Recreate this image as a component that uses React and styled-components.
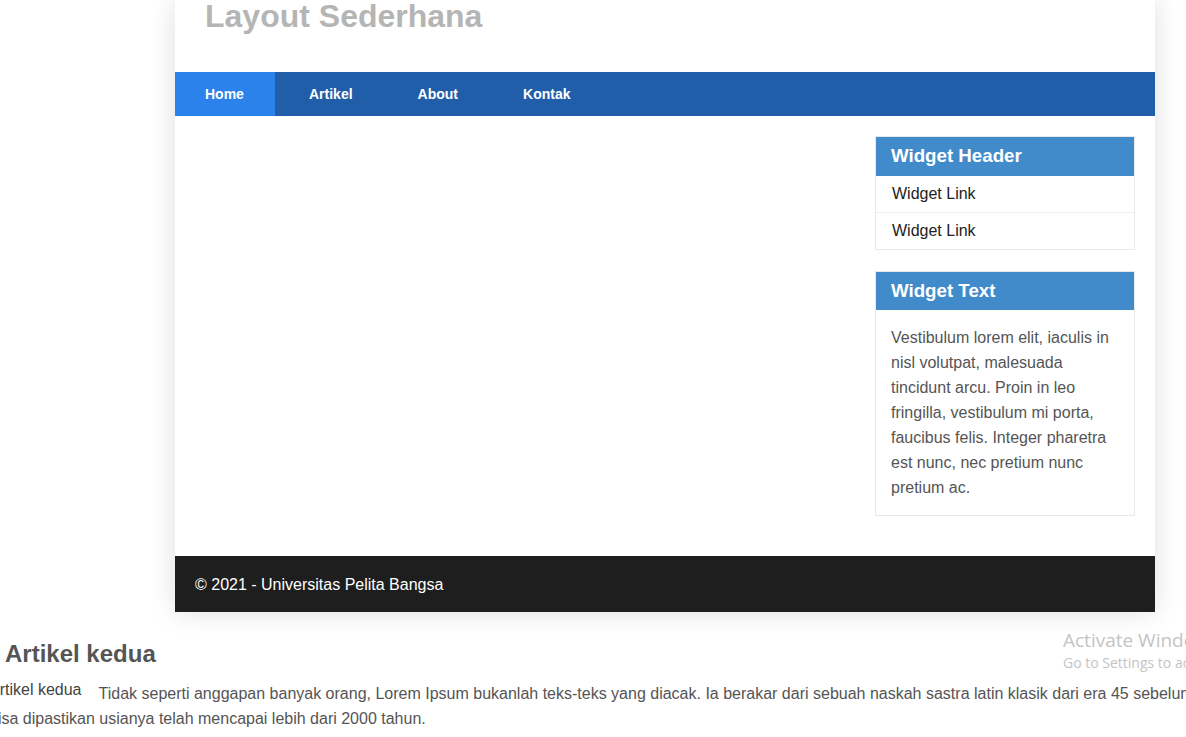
import React from 'react';
import styled, { createGlobalStyle } from 'styled-components';

const GlobalStyle = createGlobalStyle`
    html, body {
        margin: 0;
        padding: 0;
        background: #fff;
        overflow: hidden;
    }
    body {
        font-family: "Liberation Sans", Arial, sans-serif;
        color: #555;
    }
`;

const Page = styled.div`
    position: relative;
    width: 1186px;
    height: 737px;
    overflow: hidden;
`;

const Container = styled.div`
    width: 980px;
    margin-left: 175px;
    background: #fff;
    box-shadow: 0 0 25px rgba(0, 0, 0, 0.13);
`;

const Header = styled.header`
    height: 72px;
    padding: 0 30px;

    h1 {
        margin: 0;
        font-size: 32px;
        line-height: 32px;
        font-weight: bold;
        color: #b5b5b5;
    }
`;

const Nav = styled.nav`
    display: flex;
    gap: 5px;
    height: 44px;
    background: #205eaa;
`;

const NavLink = styled.a`
    display: block;
    padding: 0 30px;
    line-height: 44px;
    font-size: 14px;
    font-weight: bold;
    color: #fff;
    text-decoration: none;
    background: ${p => (p.$active ? '#2b82ea' : 'transparent')};
    ${p => p.$active && 'width: 40px; margin-right: -1px;'}
`;

const Main = styled.div`
    display: flex;
    justify-content: flex-end;
    padding: 20px 20px 40px;
`;

const Sidebar = styled.aside`
    width: 260px;
    display: flex;
    flex-direction: column;
    gap: 21px;
`;

const Widget = styled.div`
    border: 1px solid #e8e8e8;
`;

const WidgetTitle = styled.h3`
    margin: 0;
    height: ${p => p.$h || 39}px;
    line-height: ${p => (p.$h || 39) - 1}px;
    padding: 0 15px;
    background: #428bca;
    color: #fff;
    font-size: 18.72px;
    font-weight: bold;
`;

const LinkList = styled.ul`
    list-style: none;
    margin: 0;
    padding: 0;
`;

const LinkItem = styled.li`
    height: 36px;
    line-height: 35px;
    padding: 0 16px;
    font-size: 16px;
    color: #222;
    border-top: ${p => (p.$first ? 'none' : '1px solid #eee')};
`;

const WidgetBody = styled.div`
    padding: 15px;
    font-size: 16px;
    line-height: 25px;
    color: #555;
`;

const Footer = styled.footer`
    height: 56px;
    line-height: 58px;
    padding: 0 20px;
    background: #1e1e1e;
    color: #fff;
    font-size: 16px;
`;

const Article = styled.article`
    margin: 28px 0 0 -11px;
    width: 1400px;

    h2 {
        margin: 0 0 9px 16px;
        font-size: 24px;
        font-weight: bold;
        color: #555;
    }
`;

const Paragraph = styled.p`
    margin: 0;
    font-size: 16px;
    line-height: 25px;
    color: #555;
`;

const AltText = styled.span`
    display: inline-block;
    margin-right: 17px;
    font-size: 16px;
    vertical-align: 4px;
    color: #444;
`;

const Watermark = styled.div`
    position: absolute;
    left: 1063px;
    top: 628px;
    white-space: nowrap;
    font-family: "Open Sans", "Liberation Sans", sans-serif;
    color: #c4c4c4;

    div:first-child {
        font-size: 19px;
        line-height: 24px;
    }
    div:last-child {
        font-size: 14px;
        line-height: 22px;
    }
`;

const App = () => (
    <Page>
        <GlobalStyle />
        <Container>
            <Header>
                <h1>Layout Sederhana</h1>
            </Header>
            <Nav>
                <NavLink $active href="#">Home</NavLink>
                <NavLink href="#">Artikel</NavLink>
                <NavLink href="#">About</NavLink>
                <NavLink href="#">Kontak</NavLink>
            </Nav>
            <Main>
                <Sidebar>
                    <Widget>
                        <WidgetTitle>Widget Header</WidgetTitle>
                        <LinkList>
                            <LinkItem $first>Widget Link</LinkItem>
                            <LinkItem>Widget Link</LinkItem>
                        </LinkList>
                    </Widget>
                    <Widget>
                        <WidgetTitle $h={38}>Widget Text</WidgetTitle>
                        <WidgetBody>
                            Vestibulum lorem elit, iaculis in nisl volutpat, malesuada tincidunt arcu.
                            Proin in leo fringilla, vestibulum mi porta, faucibus felis. Integer pharetra
                            est nunc, nec pretium nunc pretium ac.
                        </WidgetBody>
                    </Widget>
                </Sidebar>
            </Main>
            <Footer>© 2021 - Universitas Pelita Bangsa</Footer>
        </Container>
        <Article>
            <h2>Artikel kedua</h2>
            <Paragraph>
                <AltText>Artikel kedua</AltText>
                Tidak seperti anggapan banyak orang, Lorem Ipsum bukanlah teks-teks yang diacak. Ia berakar
                dari sebuah naskah sastra latin klasik dari era 45 sebelum masehi, hingga<br />
                bisa dipastikan usianya telah mencapai lebih dari 2000 tahun.
            </Paragraph>
        </Article>
        <Watermark>
            <div>Activate Windows</div>
            <div>Go to Settings to activate Windows.</div>
        </Watermark>
    </Page>
);

export default App;
